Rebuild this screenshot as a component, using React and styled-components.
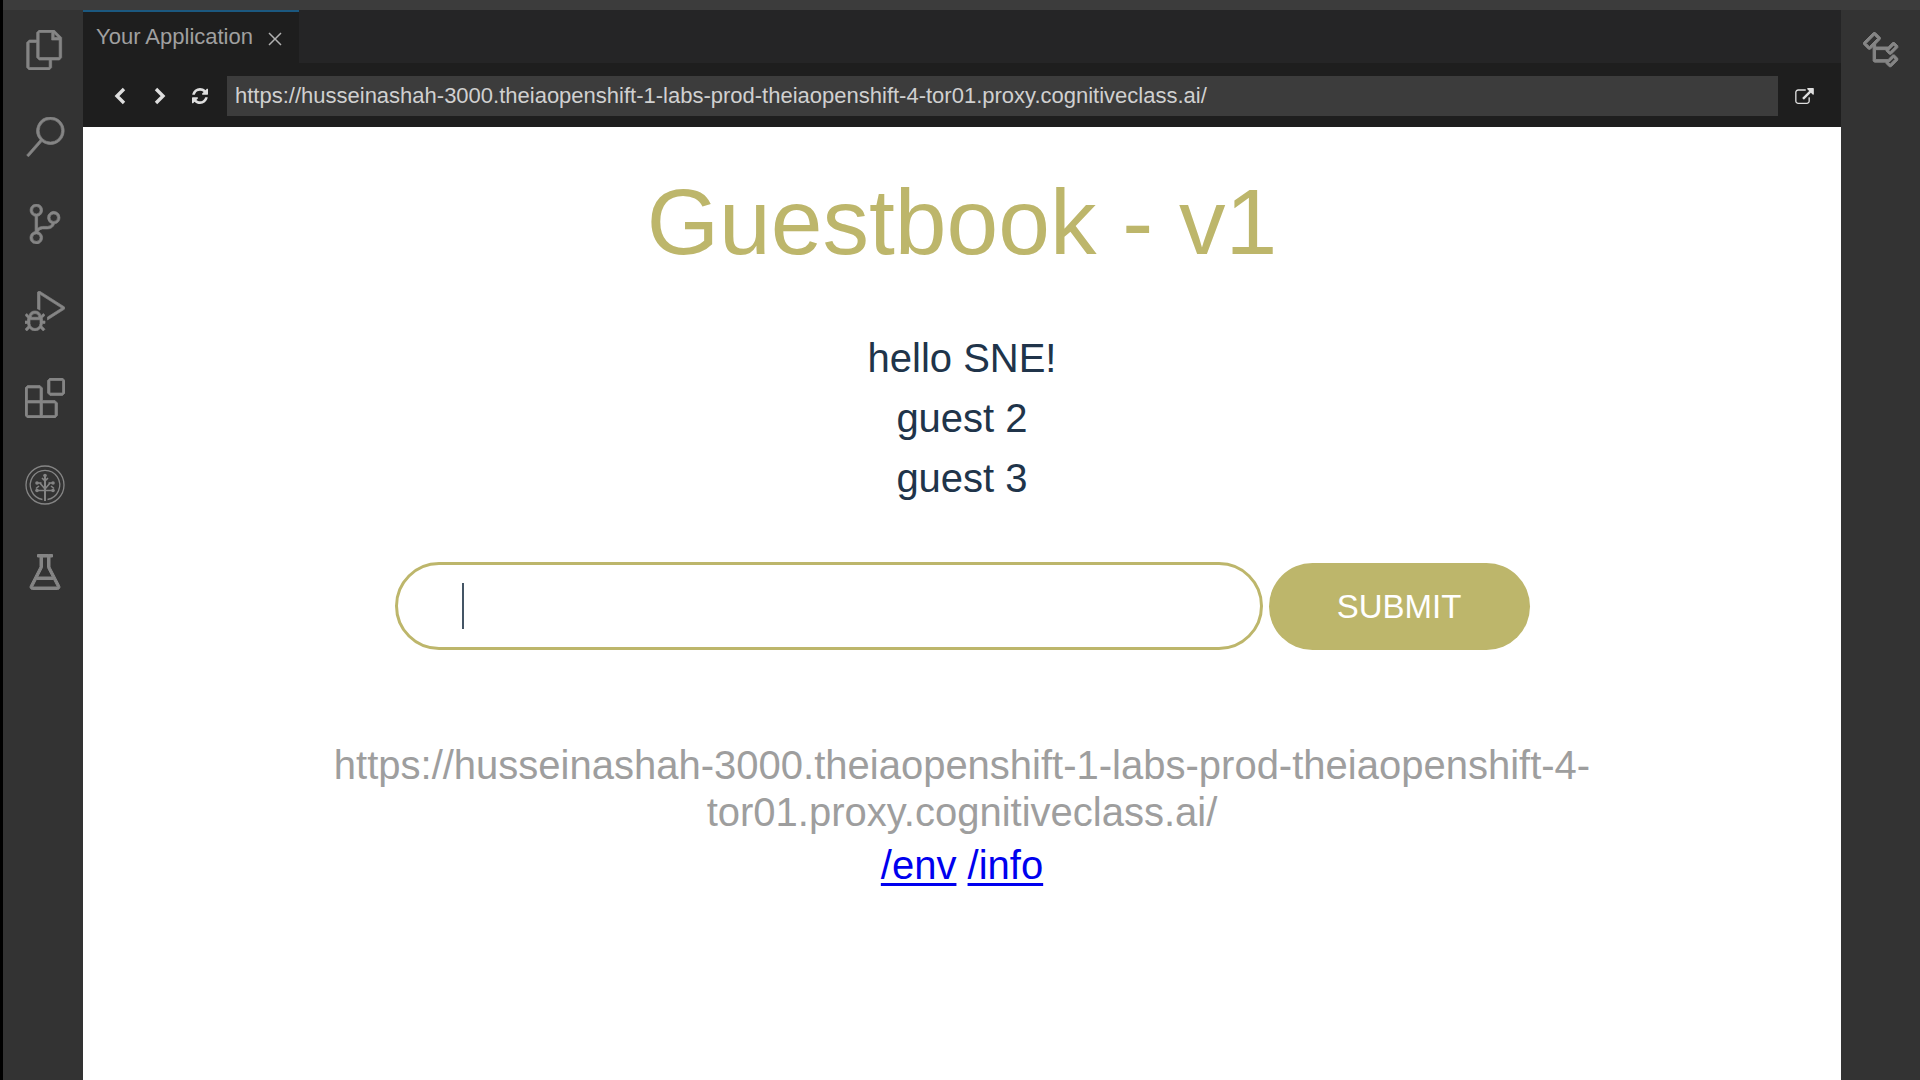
import React, { useState } from 'react';
import styled, { createGlobalStyle } from 'styled-components';
import {
  VscFiles,
  VscSearch,
  VscSourceControl,
  VscDebugAlt,
  VscExtensions,
  VscBeaker,
  VscClose,
  VscSymbolClass,
} from 'react-icons/vsc';

const APP_URL =
  'https://husseinashah-3000.theiaopenshift-1-labs-prod-theiaopenshift-4-tor01.proxy.cognitiveclass.ai/';

const GlobalStyle = createGlobalStyle`
  * { box-sizing: border-box; }
  body {
    margin: 0;
    background: #333333;
    font-family: "Liberation Sans", Arial, sans-serif;
  }
  button, input { font-family: inherit; }
`;

const Shell = styled.div`
  display: flex;
  flex-direction: column;
  min-height: 100vh;
  border-left: 3px solid #000000;
`;

const TitleStrip = styled.header`
  height: 10px;
  background: #3c3c3c;
`;

const Workbench = styled.div`
  display: flex;
  flex: 1;
`;

const SideBar = styled.nav`
  display: flex;
  flex-direction: column;
  gap: 7px;
  flex: none;
  width: ${(p) => (p.$side === 'right' ? 79 : 80)}px;
  padding-left: ${(p) => (p.$side === 'right' ? 0 : 3)}px;
  background: #333333;
`;

const SideButton = styled.button`
  display: flex;
  align-items: center;
  justify-content: center;
  height: 80px;
  padding: 0;
  border: 0;
  background: transparent;
  color: #858585;
  cursor: pointer;

  svg { width: 40px; height: 40px; }
  svg[stroke-width="0"] { stroke-width: 0.4px; }
`;

const Editor = styled.main`
  display: flex;
  flex-direction: column;
  flex: 1;
  min-width: 0;
`;

const TabBar = styled.div`
  display: flex;
  height: 53px;
  background: #252526;
`;

const Tab = styled.div`
  display: flex;
  align-items: center;
  gap: 10px;
  padding: 0 12px 2px 13px;
  border-top: 2px solid #1b587f;
  background: #1e1e1e;
  color: #a0a0a0;
  font-size: 22px;
  white-space: nowrap;
`;

const TabClose = styled.button`
  display: flex;
  padding: 4px 0 0;
  border: 0;
  background: transparent;
  color: #b0b0b0;
  cursor: pointer;

  svg { width: 24px; height: 24px; }
`;

const Toolbar = styled.div`
  display: flex;
  align-items: center;
  height: 64px;
  padding: 2px 17px 0;
  background: #1e1e1e;
`;

const ToolButton = styled.button`
  display: flex;
  align-items: center;
  justify-content: center;
  width: 40px;
  height: 40px;
  padding: 0;
  border: 0;
  background: transparent;
  color: #dedede;
  cursor: pointer;
`;

const Address = styled.input`
  flex: 1;
  min-width: 0;
  height: 40px;
  margin: 0 6px 0 7px;
  padding: 0 8px;
  border: 0;
  outline: 0;
  background: #3c3c3c;
  color: #d0d0d0;
  font-size: 22px;
`;

const Preview = styled.section`
  display: flex;
  flex-direction: column;
  align-items: center;
  flex: 1;
  padding: 42px 24px;
  background: #ffffff;
  text-align: center;
  font-size: 40px;
`;

const Title = styled.h1`
  margin: 0 0 53px;
  color: #bdb66b;
  font-size: 93px;
  font-weight: 400;
  line-height: 106px;
`;

const Entries = styled.div`
  margin-bottom: 54px;
  color: #20344a;
`;

const Entry = styled.p`
  margin: 0;
  line-height: 60px;
`;

const Form = styled.form`
  display: flex;
  align-items: flex-end;
  gap: 6px;
  width: 100%;
  max-width: 1135px;
  margin-bottom: 92px;
`;

const Field = styled.div`
  position: relative;
  flex: 1;
  display: flex;
`;

const EntryInput = styled.input`
  width: 100%;
  height: 88px;
  padding: 0 64px;
  border: 3px solid #bdb66b;
  border-radius: 44px;
  outline: 0;
  background: #ffffff;
  color: #20344a;
  caret-color: transparent;
  font-size: 40px;
`;

const Caret = styled.span`
  position: absolute;
  top: 21px;
  left: 67px;
  width: 2px;
  height: 46px;
  background: #445565;
`;

const Submit = styled.button`
  width: 261px;
  height: 87px;
  padding: 0;
  border: 0;
  border-radius: 44px;
  background: #bdb66b;
  color: #ffffff;
  font-size: 33px;
  cursor: pointer;
`;

const HostAddress = styled.p`
  width: 80%;
  margin: 0 0 6px;
  color: #9e9e9e;
  line-height: 47px;
`;

const Links = styled.p`
  margin: 0;
  line-height: 47px;
`;

const PageLink = styled.a`
  color: #0000ee;
  text-decoration: underline;
  text-decoration-thickness: 3px;
  text-underline-offset: 4px;
  text-decoration-skip-ink: none;
`;

const Chevron = ({ d }) => (
  <svg width="20" height="20" viewBox="0 0 20 20" fill="none" stroke="currentColor" strokeWidth="3.4">
    <path d={d} />
  </svg>
);

const RefreshIcon = () => (
  <svg width="16" height="16" viewBox="0 0 1536 1536" fill="currentColor">
    <path d="M1511 928q0 5-1 7-64 268-268 434.5t-478 166.5q-146 0-282.5-55t-243.5-157l-129 129q-19 19-45 19t-45-19-19-45v-448q0-26 19-45t45-19h448q26 0 45 19t19 45-19 45l-137 137q71 66 161 102t187 36q134 0 250-65t186-179q11-17 53-117 8-23 30-23h192q13 0 22.5 9.5t9.5 22.5zm25-800v448q0 26-19 45t-45 19h-448q-26 0-45-19t-19-45 19-45l138-138q-148-137-349-137-134 0-250 65t-186 179q-11 17-53 117-8 23-30 23h-199q-13 0-22.5-9.5t-9.5-22.5v-7q65-268 270-434.5t480-166.5q146 0 284 55.5t245 156.5l130-129q19-19 45-19t45 19 19 45z" />
  </svg>
);

const ExternalIcon = () => (
  <svg width="19" height="16" viewBox="0 0 1792 1536" fill="currentColor">
    <path d="M1408 928v320q0 119-84.5 203.5t-203.5 84.5h-832q-119 0-203.5-84.5t-84.5-203.5v-832q0-119 84.5-203.5t203.5-84.5h704q14 0 23 9t9 23v64q0 14-9 23t-23 9h-704q-66 0-113 47t-47 113v832q0 66 47 113t113 47h832q66 0 113-47t47-113v-320q0-14 9-23t23-9h64q14 0 23 9t9 23zm384-864v512q0 26-19 45t-45 19-45-19l-176-176-652 652q-10 10-23 10t-23-10l-114-114q-10-10-10-23t10-23l652-652-176-176q-19-19-19-45t19-45 45-19h512q26 0 45 19t19 45z" />
  </svg>
);

const TreeIcon = () => (
  <svg viewBox="0 0 40 40" fill="none" stroke="currentColor" strokeWidth="1.3">
    <circle cx="20" cy="20" r="19" />
    <path d="M17.5 34.5A14.7 14.7 0 1 1 22.5 34.5" />
    <path strokeWidth="2" d="M20 36V11" />
    <path
      strokeWidth="1.6"
      d="M20 24l-5.5-6.5M20 24l5.5-6.5M20 25.5h-8M20 25.5h8M11.5 18h5M23.5 18h5M20 16l-3-3M20 16l3-3M14 21l-3 2.5M26 21l3 2.5"
    />
    <g fill="currentColor" stroke="none">
      <circle cx="20" cy="10.5" r="1.8" />
      <circle cx="12" cy="18" r="1.8" />
      <circle cx="28" cy="18" r="1.8" />
      <circle cx="12" cy="25.5" r="1.8" />
      <circle cx="28" cy="25.5" r="1.8" />
    </g>
  </svg>
);

const activities = [
  { label: 'Explorer', Icon: VscFiles },
  { label: 'Search', Icon: VscSearch },
  { label: 'Source Control', Icon: VscSourceControl },
  { label: 'Debug', Icon: VscDebugAlt },
  { label: 'Extensions', Icon: VscExtensions },
  { label: 'Skills Network', Icon: TreeIcon },
  { label: 'Test', Icon: VscBeaker },
];

const entries = ['hello SNE!', 'guest 2', 'guest 3'];

export default function App() {
  const [address, setAddress] = useState(APP_URL);
  const [draft, setDraft] = useState('');

  return (
    <>
      <GlobalStyle />
      <Shell>
        <TitleStrip />
        <Workbench>
          <SideBar $side="left" aria-label="Activity bar">
            {activities.map(({ label, Icon }) => (
              <SideButton key={label} type="button" aria-label={label}>
                <Icon />
              </SideButton>
            ))}
          </SideBar>
          <Editor>
            <TabBar>
              <Tab>
                <span>Your Application</span>
                <TabClose type="button" aria-label="Close tab">
                  <VscClose />
                </TabClose>
              </Tab>
            </TabBar>
            <Toolbar>
              <ToolButton type="button" aria-label="Back">
                <Chevron d="M14 3L7 10l7 7" />
              </ToolButton>
              <ToolButton type="button" aria-label="Forward">
                <Chevron d="M6 3l7 7-7 7" />
              </ToolButton>
              <ToolButton type="button" aria-label="Reload">
                <RefreshIcon />
              </ToolButton>
              <Address
                aria-label="Address"
                value={address}
                onChange={(e) => setAddress(e.target.value)}
              />
              <ToolButton type="button" aria-label="Open in new window">
                <ExternalIcon />
              </ToolButton>
            </Toolbar>
            <Preview>
              <Title>Guestbook - v1</Title>
              <Entries>
                {entries.map((text) => (
                  <Entry key={text}>{text}</Entry>
                ))}
              </Entries>
              <Form onSubmit={(e) => e.preventDefault()}>
                <Field>
                  <EntryInput
                    aria-label="Guestbook entry"
                    value={draft}
                    onChange={(e) => setDraft(e.target.value)}
                  />
                  {draft === '' && <Caret />}
                </Field>
                <Submit type="submit">SUBMIT</Submit>
              </Form>
              <HostAddress>{APP_URL}</HostAddress>
              <Links>
                <PageLink href="/env">/env</PageLink> <PageLink href="/info">/info</PageLink>
              </Links>
            </Preview>
          </Editor>
          <SideBar $side="right" aria-label="Outline bar">
            <SideButton type="button" aria-label="Outline">
              <VscSymbolClass />
            </SideButton>
          </SideBar>
        </Workbench>
      </Shell>
    </>
  );
}
